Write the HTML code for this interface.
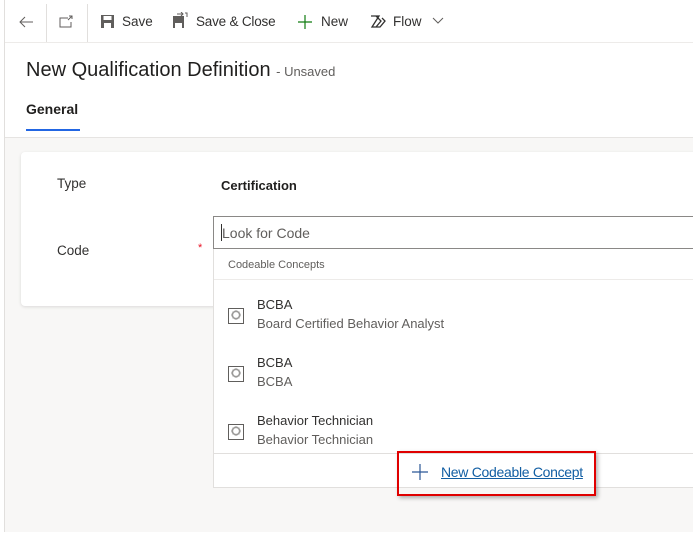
<!DOCTYPE html>
<html><head><meta charset="utf-8"><style>
*{margin:0;padding:0;box-sizing:border-box}
body{width:693px;height:541px;background:#fff;font-family:"Liberation Sans",sans-serif;position:relative;overflow:hidden;color:#323130}
.abs{position:absolute}
.tb{font-size:13.5px;color:#323130;top:14px;white-space:nowrap}
</style></head><body>
<div class="abs" style="left:4px;top:0;width:1px;height:532px;background:#e1dfdd"></div>
<div class="abs" style="left:46px;top:4px;width:1px;height:38px;background:#e1dfdd"></div>
<div class="abs" style="left:87px;top:4px;width:1px;height:38px;background:#e1dfdd"></div>
<div class="abs" style="left:5px;top:42px;width:688px;height:1px;background:#edebe9"></div>
<svg class="abs" style="left:18px;top:14px" width="16" height="16" viewBox="0 0 16 16"><path d="M15 8H2M7 3L2 8l5 5" stroke="#605e5c" fill="none" stroke-width="1"/></svg>
<svg class="abs" style="left:58px;top:14px" width="16" height="16" viewBox="0 0 16 16"><path d="M10 4H2v9h11V8M11 2h3v3M14 2l-4 4" stroke="#605e5c" fill="none" stroke-width="1"/></svg>
<svg class="abs" style="left:100px;top:14px" width="15" height="15" viewBox="0 0 15 15"><rect x="1" y="1" width="13" height="13" fill="#605e5c"/><rect x="3.5" y="2" width="8" height="4" fill="#fff"/><rect x="4" y="9" width="7" height="5" fill="#fff"/></svg>
<div class="tb abs" style="left:122px">Save</div>
<svg class="abs" style="left:172px;top:12px" width="16" height="17" viewBox="0 0 16 17"><rect x="1" y="4" width="11" height="12" fill="#605e5c"/><rect x="3" y="11" width="7" height="5" fill="#fff"/><path d="M5 2h6M9 0l2 2-2 2M13 1h2v4" stroke="#605e5c" fill="none"/></svg>
<div class="tb abs" style="left:196px;letter-spacing:-0.2px">Save &amp; Close</div>
<svg class="abs" style="left:297px;top:14px" width="16" height="16" viewBox="0 0 16 16"><path d="M8 1v14M1 8h14" stroke="#107c10" stroke-width="1.2"/></svg>
<div class="tb abs" style="left:321px">New</div>
<svg class="abs" style="left:370px;top:14px" width="16" height="15" viewBox="0 0 16 15"><path d="M1 2h8l-7 11h8l5-6-3-3M6 2l5 5-5 6" stroke="#323130" fill="none" stroke-width="1.3"/></svg>
<div class="tb abs" style="left:393px">Flow</div>
<svg class="abs" style="left:432px;top:17px" width="12" height="8" viewBox="0 0 12 8"><path d="M1 1l5 5 5-5" stroke="#605e5c" fill="none"/></svg>
<div class="abs" style="left:26px;top:59px;font-size:20px;color:#201f1e;white-space:nowrap">New Qualification Definition <span style="font-size:13px;color:#605e5c">- Unsaved</span></div>
<div class="abs" style="left:26px;top:101px;font-size:14px;font-weight:bold;color:#201f1e">General</div>
<div class="abs" style="left:26px;top:129px;width:54px;height:2px;background:#2266e3"></div>
<div class="abs" style="left:5px;top:137px;width:688px;height:395px;background:#f8f7f6;border-top:1px solid #e6e4e2"></div>
<div class="abs" style="left:21px;top:152px;width:690px;height:154px;background:#fff;border-radius:4px;box-shadow:0 1px 3px rgba(0,0,0,.12)"></div>
<div class="abs" style="left:57px;top:176px;font-size:13.5px;color:#323130">Type</div>
<div class="abs" style="left:221px;top:178px;font-size:13px;font-weight:bold;color:#201f1e">Certification</div>
<div class="abs" style="left:57px;top:243px;font-size:13.5px;color:#323130">Code</div>
<div class="abs" style="left:198px;top:242px;font-size:11px;color:#e81123">*</div>
<div class="abs" style="left:213px;top:248px;width:490px;height:240px;background:#fff;border:1px solid #e1dfdd;border-top:none"></div>
<div class="abs" style="left:213px;top:216px;width:490px;height:33px;background:#fff;border:1px solid #8a8886"></div>
<div class="abs" style="left:221px;top:224px;width:1px;height:17px;background:#323130"></div>
<div class="abs" style="left:222px;top:225px;font-size:14px;color:#605e5c">Look for Code</div>
<div class="abs" style="left:228px;top:259px;font-size:11px;color:#605e5c">Codeable Concepts</div>
<div class="abs" style="left:214px;top:279px;width:479px;height:1px;background:#edebe9"></div>
<div class="abs" style="left:214px;top:453px;width:479px;height:1px;background:#e1dfdd"></div>
<div class="abs" style="left:257px;top:295px;font-size:13px;color:#323130;line-height:19px">BCBA<br><span style="color:#605e5c">Board Certified Behavior Analyst</span></div>
<div class="abs" style="left:257px;top:353px;font-size:13px;color:#323130;line-height:19px">BCBA<br><span style="color:#605e5c">BCBA</span></div>
<div class="abs" style="left:257px;top:411px;font-size:13px;color:#323130;line-height:19px">Behavior Technician<br><span style="color:#605e5c">Behavior Technician</span></div>
<svg class="abs" style="left:228px;top:308px" width="16" height="16" viewBox="0 0 16 16"><rect x="0.5" y="0.5" width="15" height="15" fill="none" stroke="#605e5c"/><path d="M5 4h2v-1h2v1h2v2h1v2h-1v2h-2v1h-2v-1h-2v-2h-1v-2h1z" fill="none" stroke="#605e5c" stroke-width=".8"/></svg>
<svg class="abs" style="left:228px;top:366px" width="16" height="16" viewBox="0 0 16 16"><rect x="0.5" y="0.5" width="15" height="15" fill="none" stroke="#605e5c"/><path d="M5 4h2v-1h2v1h2v2h1v2h-1v2h-2v1h-2v-1h-2v-2h-1v-2h1z" fill="none" stroke="#605e5c" stroke-width=".8"/></svg>
<svg class="abs" style="left:228px;top:424px" width="16" height="16" viewBox="0 0 16 16"><rect x="0.5" y="0.5" width="15" height="15" fill="none" stroke="#605e5c"/><path d="M5 4h2v-1h2v1h2v2h1v2h-1v2h-2v1h-2v-1h-2v-2h-1v-2h1z" fill="none" stroke="#605e5c" stroke-width=".8"/></svg>
<svg class="abs" style="left:412px;top:464px" width="16" height="16" viewBox="0 0 16 16"><path d="M8 0v16M0 8h16" stroke="#2b5797" stroke-width="1.2"/></svg>
<div class="abs" style="left:441px;top:464px;font-size:14px;color:#115ea3;text-decoration:underline;letter-spacing:-0.3px">New Codeable Concept</div>
<div class="abs" style="left:397px;top:451px;width:199px;height:45px;border:2px solid #e00000;box-shadow:2px 2px 4px rgba(0,0,0,.3)"></div>
</body></html>
